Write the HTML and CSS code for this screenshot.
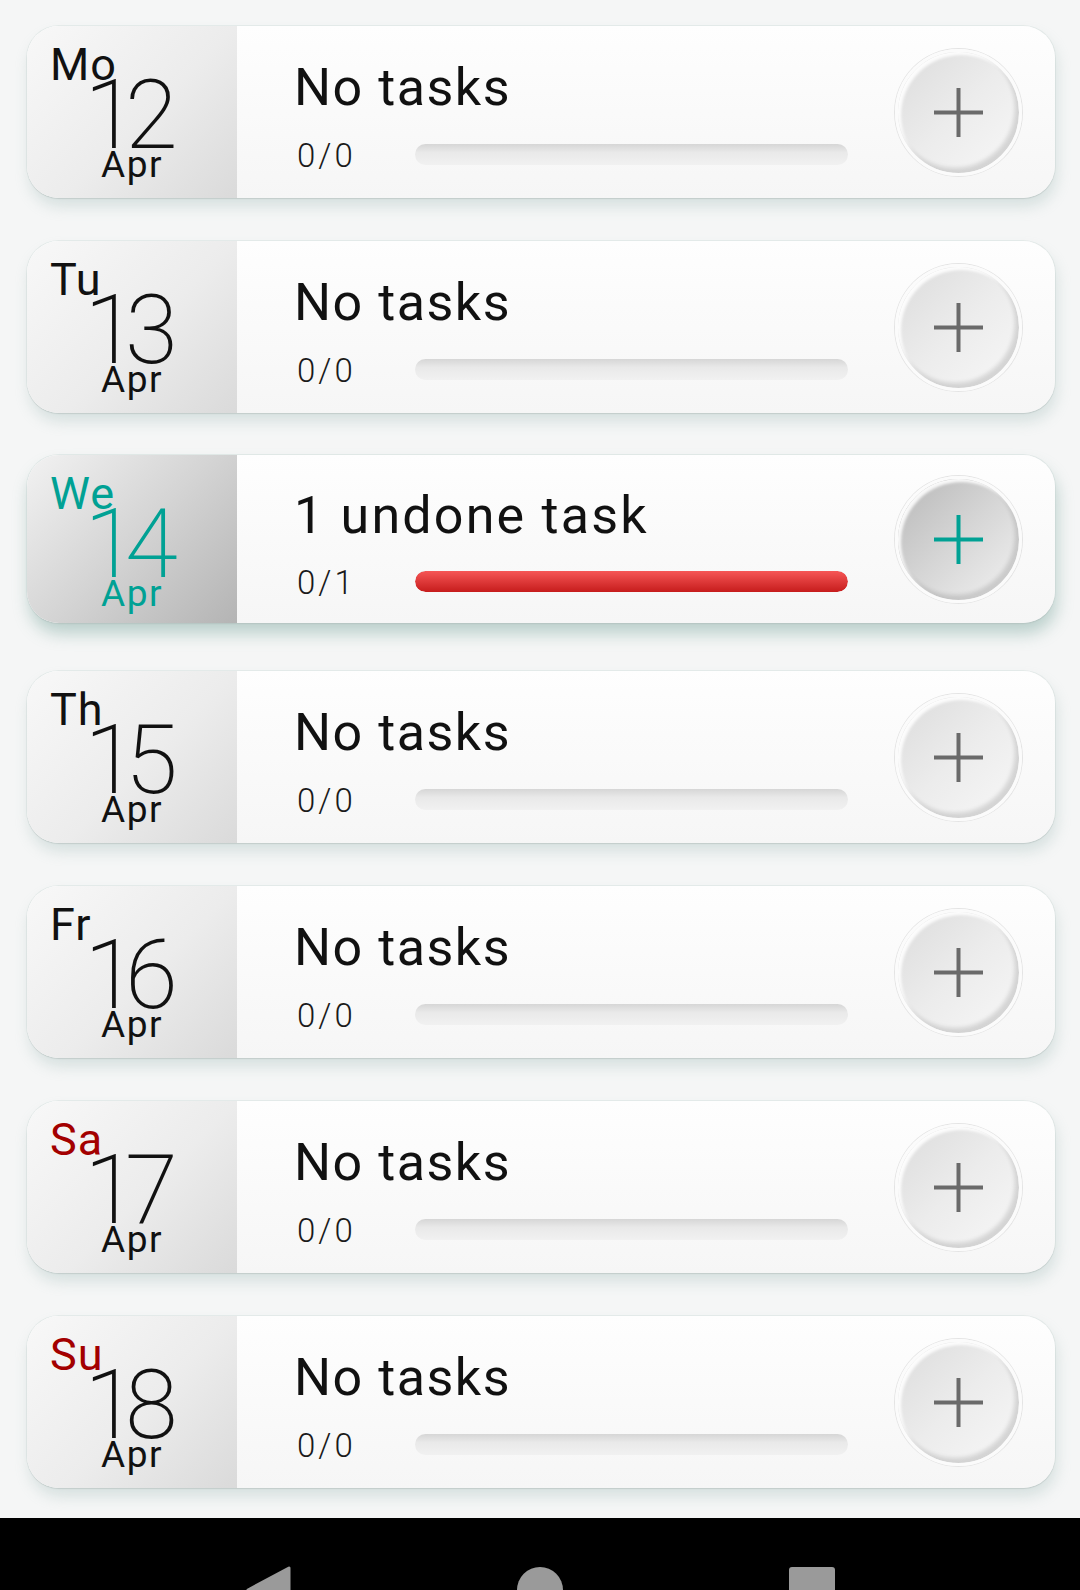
FILE: index.html
```html
<!DOCTYPE html>
<html lang="en">
<head>
<meta charset="utf-8">
<title>Week</title>
<link rel="stylesheet" href="styles.css">
</head>
<body>
<div class="screen">
  <main class="list">
    <article class="day-card">
      <div class="date"><span class="dow">Mo</span><span class="num">12</span><span class="mon">Apr</span></div>
      <div class="body"><div class="title">No tasks</div><div class="progress-row"><span class="count">0/0</span><div class="bar"></div></div></div>
      <button class="add"><svg viewBox="0 0 49 49" width="49" height="49"><path d="M24.5 0v49M0 24.5h49"/></svg></button>
    </article>
    <article class="day-card">
      <div class="date"><span class="dow">Tu</span><span class="num">13</span><span class="mon">Apr</span></div>
      <div class="body"><div class="title">No tasks</div><div class="progress-row"><span class="count">0/0</span><div class="bar"></div></div></div>
      <button class="add"><svg viewBox="0 0 49 49" width="49" height="49"><path d="M24.5 0v49M0 24.5h49"/></svg></button>
    </article>
    <article class="day-card selected">
      <div class="date"><span class="dow">We</span><span class="num">14</span><span class="mon">Apr</span></div>
      <div class="body"><div class="title">1 undone task</div><div class="progress-row"><span class="count">0/1</span><div class="bar"><div class="fill" style="width:100%"></div></div></div></div>
      <button class="add"><svg viewBox="0 0 49 49" width="49" height="49"><path d="M24.5 0v49M0 24.5h49"/></svg></button>
    </article>
    <article class="day-card">
      <div class="date"><span class="dow">Th</span><span class="num">15</span><span class="mon">Apr</span></div>
      <div class="body"><div class="title">No tasks</div><div class="progress-row"><span class="count">0/0</span><div class="bar"></div></div></div>
      <button class="add"><svg viewBox="0 0 49 49" width="49" height="49"><path d="M24.5 0v49M0 24.5h49"/></svg></button>
    </article>
    <article class="day-card">
      <div class="date"><span class="dow">Fr</span><span class="num">16</span><span class="mon">Apr</span></div>
      <div class="body"><div class="title">No tasks</div><div class="progress-row"><span class="count">0/0</span><div class="bar"></div></div></div>
      <button class="add"><svg viewBox="0 0 49 49" width="49" height="49"><path d="M24.5 0v49M0 24.5h49"/></svg></button>
    </article>
    <article class="day-card weekend">
      <div class="date"><span class="dow">Sa</span><span class="num">17</span><span class="mon">Apr</span></div>
      <div class="body"><div class="title">No tasks</div><div class="progress-row"><span class="count">0/0</span><div class="bar"></div></div></div>
      <button class="add"><svg viewBox="0 0 49 49" width="49" height="49"><path d="M24.5 0v49M0 24.5h49"/></svg></button>
    </article>
    <article class="day-card weekend">
      <div class="date"><span class="dow">Su</span><span class="num">18</span><span class="mon">Apr</span></div>
      <div class="body"><div class="title">No tasks</div><div class="progress-row"><span class="count">0/0</span><div class="bar"></div></div></div>
      <button class="add"><svg viewBox="0 0 49 49" width="49" height="49"><path d="M24.5 0v49M0 24.5h49"/></svg></button>
    </article>
  </main>
  <nav class="navbar">
    <svg class="nav-back" viewBox="0 0 46 48" width="46" height="48"><path d="M44 2 L44 46 L3 24 Z"/></svg>
    <span class="nav-home"></span>
    <span class="nav-recent"></span>
  </nav>
</div>
</body>
</html>
```
FILE: styles.css
```css
* { box-sizing: border-box; }
html, body { margin: 0; padding: 0; }
body {
  background: #f5f6f6;
  font-family: Roboto, "Noto Sans", "Liberation Sans", sans-serif;
  color: #111;
}
.screen {
  width: 1080px;
  height: 1590px;
  display: flex;
  flex-direction: column;
  overflow: hidden;
}
.list {
  flex: 1;
  display: flex;
  flex-direction: column;
  gap: 43px;
  padding: 26px 25px 0 27px;
}
.day-card {
  height: 172px;
  flex: none;
  display: flex;
  border-radius: 32px;
  overflow: hidden;
  background: linear-gradient(#fefefe, #f6f6f6);
  box-shadow: 0 0 0 1px rgba(200, 215, 212, 0.35), 0 1px 1px rgba(0, 0, 0, 0.12), 2px 9px 14px rgba(150, 180, 175, 0.3);
}
.date {
  width: 210px;
  flex: none;
  display: flex;
  flex-direction: column;
  align-items: center;
  padding-top: 22px;
  background: linear-gradient(135deg, #f8f8f8 0%, #ececec 55%, #dadada 100%);
}
.dow {
  align-self: flex-start;
  margin-left: 23px;
  font-size: 45px;
  line-height: 34px;
  height: 34px;
  letter-spacing: 1px;
  font-weight: 400;
  color: #111;
}
.num {
  font-size: 96px;
  line-height: 66px;
  height: 66px;
  font-weight: 200;
  letter-spacing: -12px;
  margin-left: -14px;
  color: #111;
}
.mon {
  font-size: 37px;
  line-height: 30px;
  height: 30px;
  letter-spacing: 1.5px;
  margin-top: 2px;
  color: #111;
}
.weekend .dow { color: #a30000; }
.body {
  flex: 1;
  padding: 36px 47px 0 57px;
}
.title {
  font-size: 52px;
  line-height: 52px;
  letter-spacing: 1.5px;
  font-weight: 400;
  color: #111;
  white-space: nowrap;
}
.selected .title { letter-spacing: 2.2px; }
.progress-row {
  display: flex;
  align-items: center;
  height: 22px;
  margin-top: 31px;
}
.count {
  width: 121px;
  flex: none;
  font-size: 33px;
  line-height: 22px;
  font-weight: 300;
  letter-spacing: 3px;
  color: #1a1a1a;
  padding-left: 3px;
}
.bar {
  flex: 1;
  height: 21px;
  margin-top: -3px;
  border-radius: 11px;
  background: linear-gradient(#d6d6d6 0%, #e9e9e9 40%, #f1f1f1 100%);
  overflow: hidden;
}
.fill {
  height: 100%;
  border-radius: 11px;
  background: linear-gradient(#f65656, #c61c1c);
}
.add {
  flex: none;
  align-self: center;
  width: 127px;
  height: 127px;
  margin-right: 33px;
  padding: 0;
  border-radius: 50%;
  border: 3px solid #fbfbfb;
  background: linear-gradient(135deg, #dcdcdc 0%, #ececec 50%, #f7f7f7 100%);
  box-shadow: 0 0 0 1px #e4e4e4, inset -4px -5px 4px rgba(0, 0, 0, 0.13), inset 3px 3px 3px rgba(255, 255, 255, 0.9);
  display: flex;
  align-items: center;
  justify-content: center;
}
.add svg path {
  stroke: #6a6a6a;
  stroke-width: 4;
  fill: none;
}
.selected {
  height: 168px;
  margin-top: -1px;
  margin-bottom: 5px;
  box-shadow: 0 0 0 1px rgba(200, 215, 212, 0.4), 0 1px 1px rgba(0, 0, 0, 0.12), 2px 11px 16px rgba(120, 165, 155, 0.45);
}
.selected .date {
  background: linear-gradient(135deg, #f2f2f2 0%, #d4d4d4 50%, #b4b4b4 100%);
}
.selected .dow, .selected .num, .selected .mon { color: #00a194; }
.selected .body { padding-top: 35px; }
.selected .progress-row { margin-top: 30px; }
.selected .add {
  background: linear-gradient(135deg, #b8b8b8 0%, #d6d6d6 50%, #f2f2f2 100%);
}
.selected .add svg path { stroke: #00a194; }
.navbar {
  height: 72px;
  flex: none;
  background: #000;
  display: flex;
  justify-content: center;
  align-items: flex-start;
  gap: 226px;
  padding-top: 48px;
  overflow: hidden;
}
.nav-back path {
  fill: #9a9a9a;
  stroke: #9a9a9a;
  stroke-width: 3;
  stroke-linejoin: round;
}
.nav-home {
  width: 46px;
  height: 46px;
  border-radius: 50%;
  background: #9a9a9a;
  margin-top: 1px;
}
.nav-recent {
  width: 46px;
  height: 46px;
  border-radius: 3px;
  background: #9a9a9a;
  margin-top: 1px;
}
```
